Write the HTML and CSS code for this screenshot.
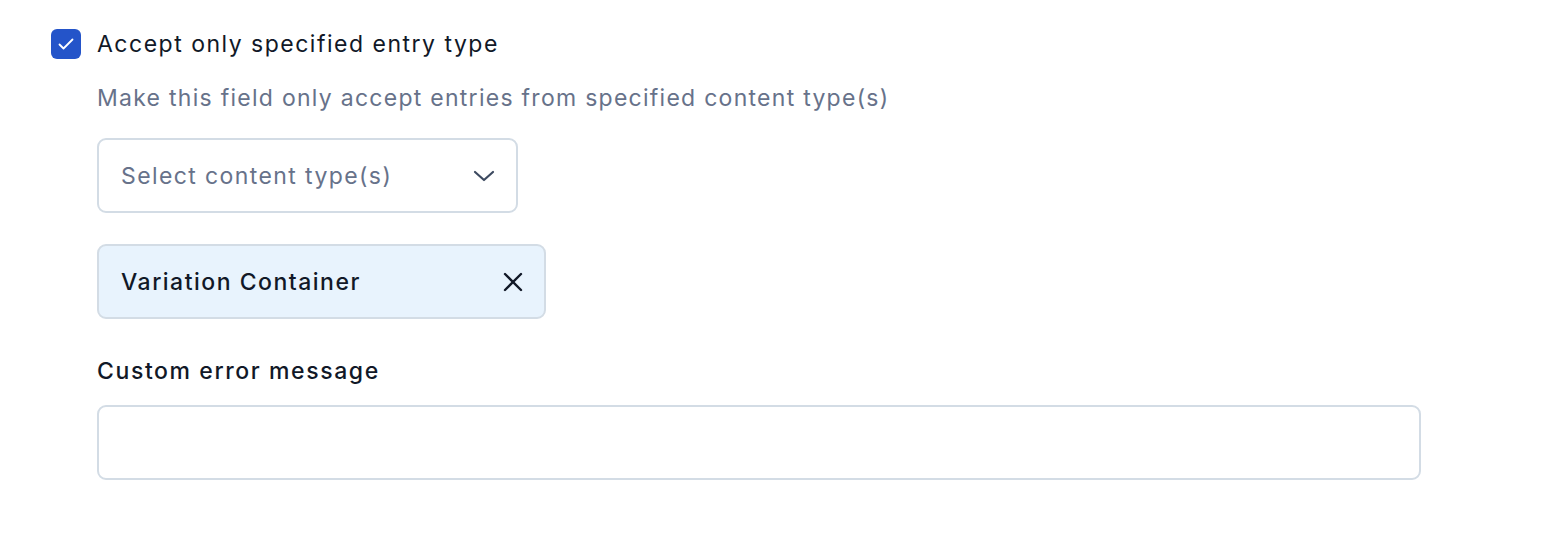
FILE: index.html
```html
<!DOCTYPE html>
<html>
<head>
<meta charset="utf-8">
<link rel="stylesheet" href="styles.css">
</head>
<body>
<div class="field">
  <label class="check-row">
    <span class="checkbox">
      <svg width="18" height="18" viewBox="0 0 18 18"><path d="M2.5 9.5l4 4 9-9" fill="none" stroke="#fff" stroke-width="1.8" stroke-linecap="round" stroke-linejoin="round"/></svg>
    </span>
    <span class="check-label">Accept only specified entry type</span>
  </label>
  <div class="nested">
    <p class="help">Make this field only accept entries from specified content type(s)</p>
    <div class="select">
      <span class="placeholder">Select content type(s)</span>
      <svg class="chevron" width="22" height="12" viewBox="0 0 22 12"><path d="M2 2l9 8 9-8" fill="none" stroke="#3d4a60" stroke-width="2.2" stroke-linecap="round" stroke-linejoin="round"/></svg>
    </div>
    <div class="pill">
      <span class="pill-text">Variation Container</span>
      <svg class="close" width="20" height="20" viewBox="0 0 20 20"><path d="M2 2l16 16M18 2L2 18" fill="none" stroke="#111827" stroke-width="2.4" stroke-linecap="round"/></svg>
    </div>
    <div class="label">Custom error message</div>
    <div class="input"></div>
  </div>
</div>
</body>
</html>
```
FILE: styles.css
```css
html, body {
  margin: 0;
  padding: 0;
  background: #fff;
}
body {
  font-family: Inter, "Noto Sans", sans-serif;
  color: #111827;
  width: 1560px;
  height: 542px;
  overflow: hidden;
  letter-spacing: 1.5px;
}
.field {
  padding: 29px 0 0 51px;
}
.check-row {
  display: flex;
  align-items: center;
  gap: 16px;
  height: 30px;
}
.checkbox {
  width: 30px;
  height: 30px;
  border-radius: 6px;
  background: #2454c9;
  display: flex;
  align-items: center;
  justify-content: center;
}
.check-label {
  font-size: 23px;
  color: #111827;
}
.nested {
  padding-left: 46px;
}
.help {
  margin: 24px 0 0 0;
  font-size: 23px;
  line-height: 30px;
  color: #67728a;
  letter-spacing: 1.27px;
}
.select {
  margin-top: 25px;
  width: 421px;
  height: 75px;
  box-sizing: border-box;
  border: 2px solid #d3dce5;
  border-radius: 9px;
  display: flex;
  align-items: center;
  justify-content: space-between;
  padding: 0 21px 0 22px;
}
.placeholder {
  font-size: 23px;
  color: #67728a;
  letter-spacing: 1.4px;
}
.pill {
  margin-top: 31px;
  width: 449px;
  height: 75px;
  box-sizing: border-box;
  border: 2px solid #d3dce5;
  border-radius: 9px;
  background: #e8f3fd;
  display: flex;
  align-items: center;
  justify-content: space-between;
  padding: 0 21px 0 22px;
}
.pill-text {
  font-size: 23px;
  font-weight: 500;
  color: #111827;
}
.label {
  margin-top: 37px;
  font-size: 23px;
  font-weight: 500;
  line-height: 30px;
  color: #111827;
  letter-spacing: 1.6px;
}
.input {
  margin-top: 19px;
  width: 1324px;
  height: 75px;
  box-sizing: border-box;
  border: 2px solid #d3dce5;
  border-radius: 9px;
}
```
